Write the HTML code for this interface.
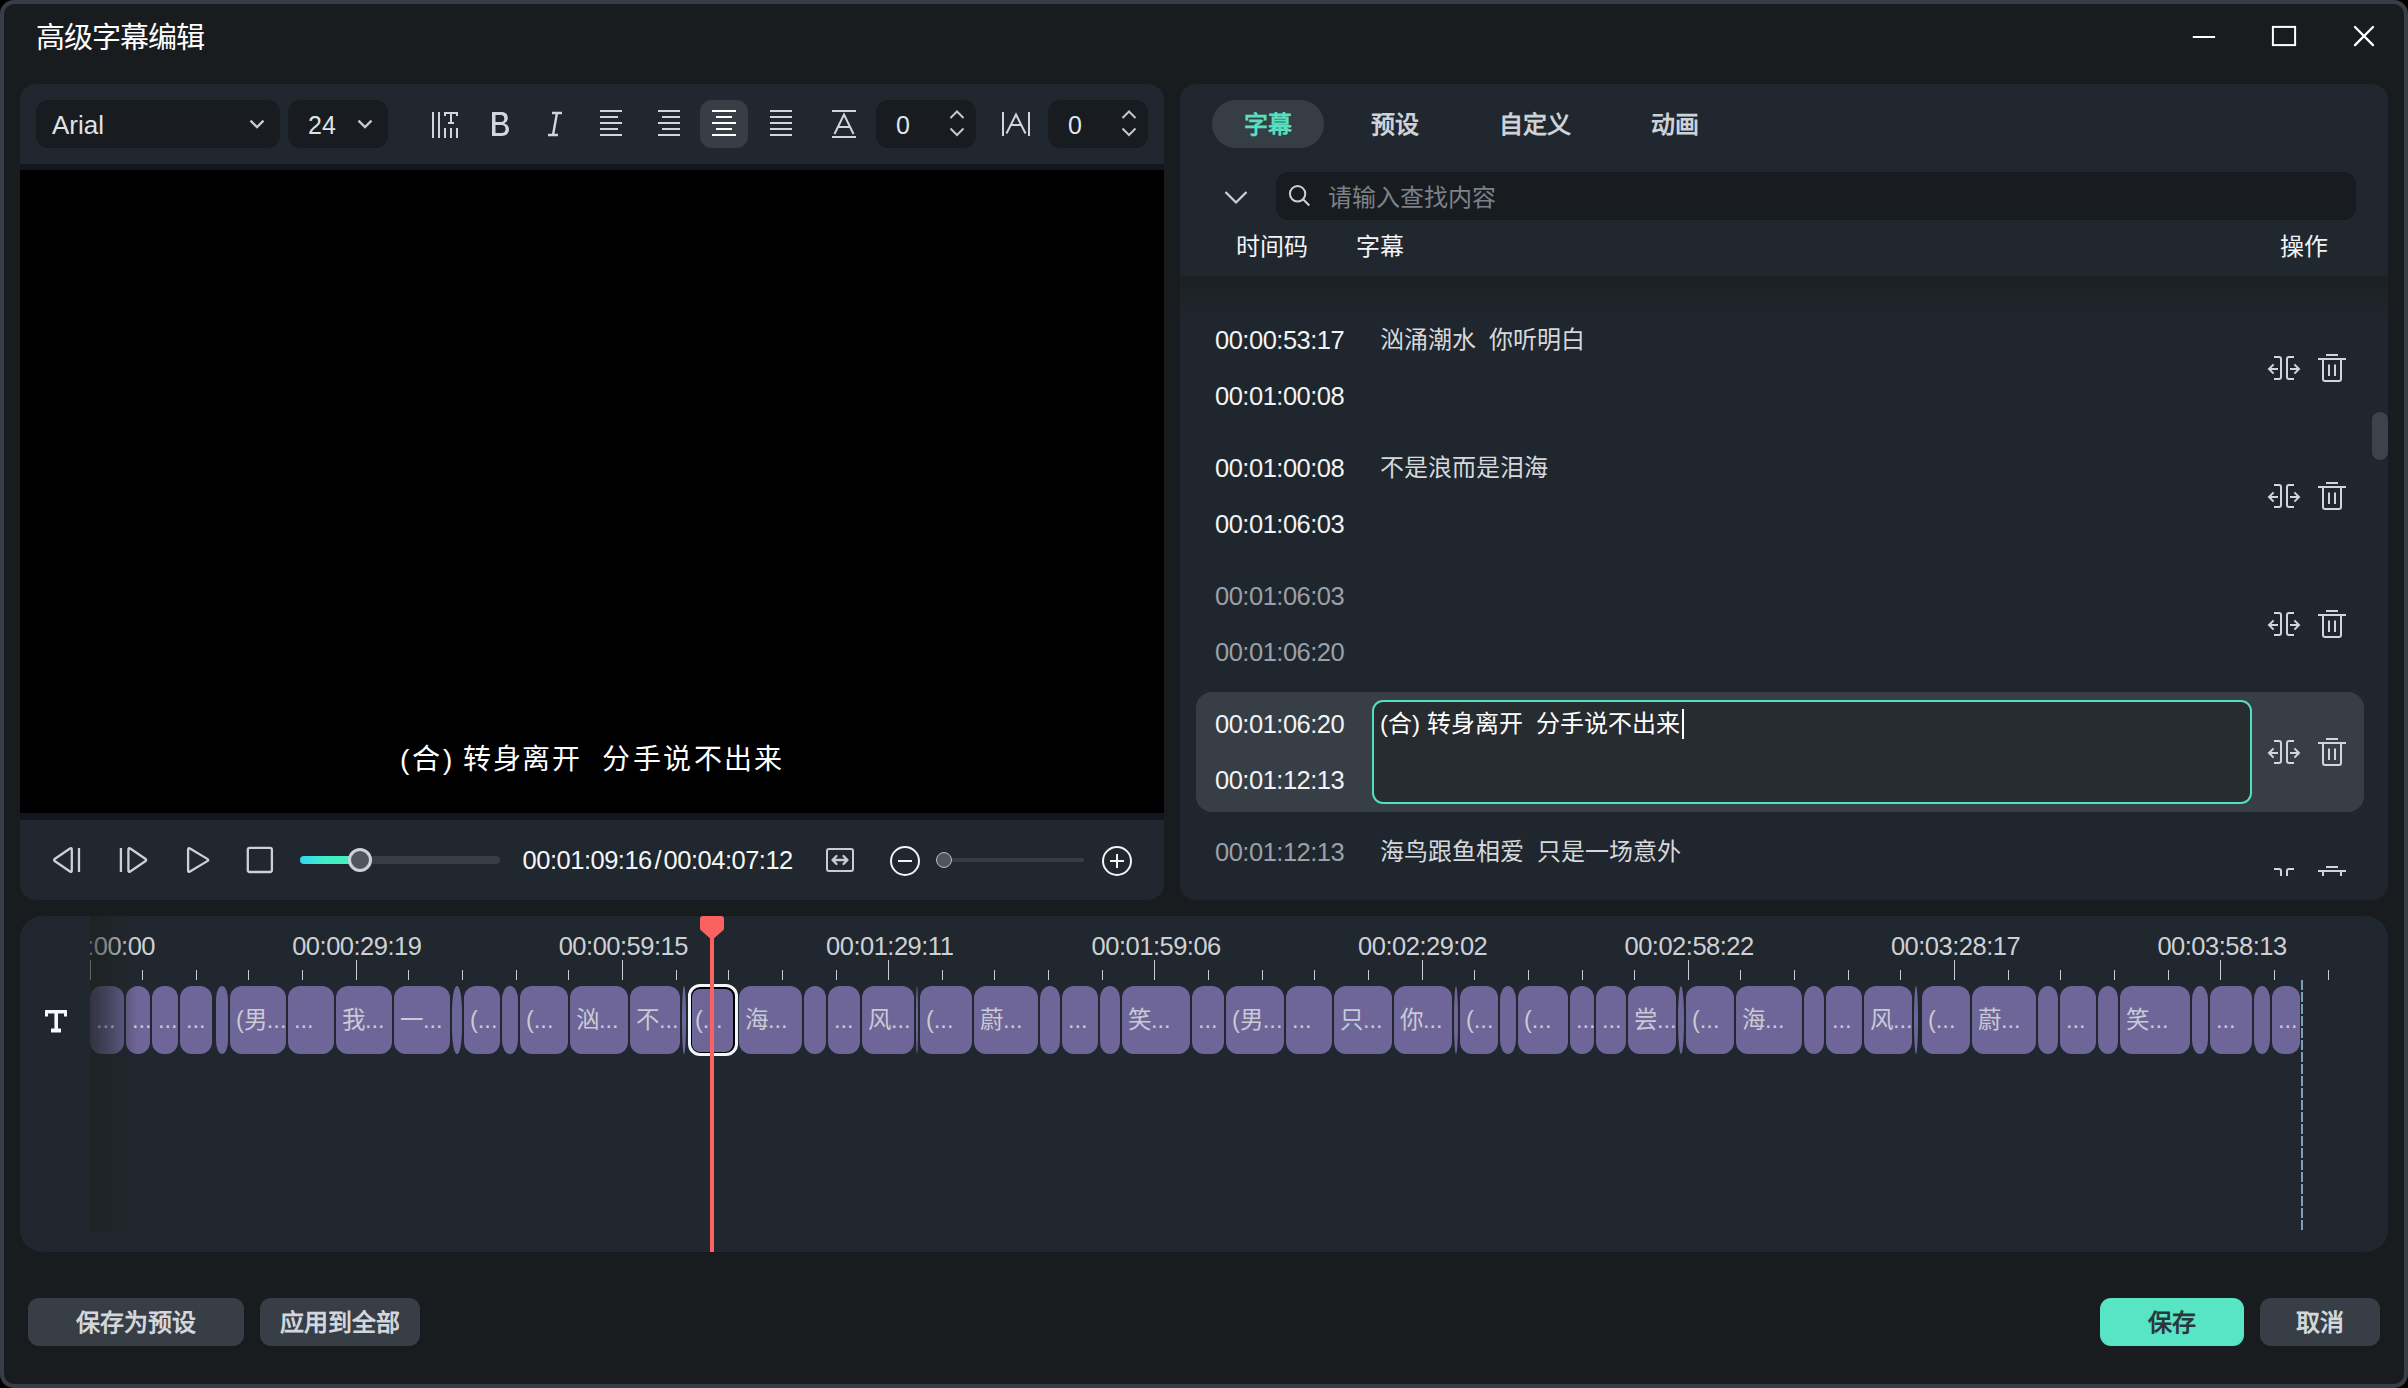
<!DOCTYPE html><html lang="zh-CN"><head><meta charset="utf-8"><title>高级字幕编辑</title><style>
*{box-sizing:border-box;margin:0;padding:0}
html,body{width:2408px;height:1388px;overflow:hidden;background:#000}
body{font-family:"Liberation Sans",sans-serif;color:#e9ebee;position:relative}
.abs,.win *{position:absolute}
.win{position:absolute;left:0;top:0;width:2408px;height:1388px;border:4px solid #373d44;border-radius:14px;background:#191c1f;overflow:hidden}
/* everything inside .win is positioned relative to the page origin via .o (offset -4,-4) */
.o{left:-4px;top:-4px;width:2408px;height:1388px}
.panel{background:#21272e;border-radius:16px}
.dark{background:#181c20;border-radius:12px}
.t{white-space:nowrap;line-height:1}
svg{overflow:visible}
.clip{top:986px;height:68px;background:#6e6698;border-radius:12px;overflow:hidden;color:#cacad4;font-size:23.5px;line-height:68px;white-space:nowrap;padding-left:6px}
.tk{width:1.3px;background:#c8ced5;top:970px;height:10px}
.tk.M{top:960px;height:20px}
.rl{top:932px;font-size:25.5px;letter-spacing:-.5px;line-height:26px;color:#cdd1d6;white-space:nowrap;width:200px;text-align:center}
.tc{left:1215px;font-size:25.5px;letter-spacing:-.5px;line-height:28px;white-space:nowrap;color:#f1f3f5}
.tc.g{color:#9aa0a7}
.sub{left:1380px;font-size:24px;line-height:28px;white-space:nowrap;color:#d5d8dc}
.btn{top:1298px;height:48px;border-radius:11px;background:#373e46;color:#d3d7dc;font-weight:bold;font-size:24px;line-height:50px;text-align:center;white-space:nowrap}
.tab{top:100px;height:48px;line-height:50px;font-size:24px;font-weight:bold;color:#ced2d7;white-space:nowrap;text-align:center}
</style></head><body>
<div class="win"><div class="o">
<div class="t" style="left:35.5px;top:21.5px;font-size:29px;letter-spacing:-1px;line-height:32px;color:#fff">高级字幕编辑</div>
<svg class="abs" style="left:2180px;top:16px" width="200" height="44" viewBox="0 0 200 44" fill="none" stroke="#d2d6dc" stroke-width="2" ><path d="M12.8 20.9H35.1" stroke="#fff"/><rect x="92.9" y="10.9" width="22.2" height="18.2" stroke="#fff"/><path d="M175 11L193 29.1M193 11L175 29.1" stroke="#fff" stroke-width="2.3" stroke-linecap="round"/></svg>
<div class="panel" style="left:20px;top:84px;width:1144px;height:816px;overflow:hidden">
<div style="left:0;top:80px;width:1144px;height:656px;background:#12161e"></div>
<div style="left:0;top:86px;width:1144px;height:643px;background:#000"></div>
</div>
<div class="dark" style="left:36px;top:100px;width:244px;height:48px"></div>
<div class="t" style="left:52px;top:111px;font-size:26px;line-height:28px;color:#dfe3e8">Arial</div>
<svg class="abs" style="left:246px;top:114px" width="22" height="22" viewBox="0 0 22 22" fill="none" stroke="#d2d6dc" stroke-width="2" ><path d="M4.5 6.6L11 13.1L17.5 6.6" stroke="#c4c8cd" stroke-width="2.4"/></svg>
<div class="dark" style="left:288px;top:100px;width:100px;height:48px"></div>
<div class="t" style="left:308px;top:111px;font-size:25px;line-height:28px;color:#dfe3e8">24</div>
<svg class="abs" style="left:354px;top:114px" width="22" height="22" viewBox="0 0 22 22" fill="none" stroke="#d2d6dc" stroke-width="2" ><path d="M4.5 6.6L11 13.1L17.5 6.6" stroke="#c4c8cd" stroke-width="2.4"/></svg>
<svg class="abs" style="left:430px;top:110px" width="30" height="30" viewBox="0 0 30 30" fill="none" stroke="#d2d6dc" stroke-width="2" ><path d="M3 2V28M9 2V28M15 18V28M21 18V28M27 18V28"/><path d="M15 6V3H27V6M21 3V13M18 13H24"/></svg>
<svg class="abs" style="left:491.5px;top:112px" width="17" height="24" viewBox="0 0 17 24" fill="#d2d6dc" fill-rule="evenodd"><path d="M0 0H9.4C13.4 0 15.8 2.3 15.8 6C15.8 8.7 14.4 10.5 12.1 11.4C15.1 12 17 14.2 17 17.3C17 21.5 14 24 9.8 24H0ZM3.5 3V10.1H8.8C11.1 10.1 12.3 8.8 12.3 6.5C12.3 4.2 11.1 3 8.8 3ZM3.5 13.1V21H9.4C12.1 21 13.5 19.5 13.5 17C13.5 14.5 12.1 13.1 9.4 13.1Z"/></svg>
<svg class="abs" style="left:546px;top:110px" width="18" height="28" viewBox="0 0 18 28" fill="none" stroke="#d2d6dc" stroke-width="2" ><path d="M6 3H16M2 25H12M11 3L7 25" stroke-width="2.4"/></svg>
<svg class="abs" style="left:600px;top:108px" width="22" height="30" viewBox="0 0 22 30" fill="none" stroke="#d2d6dc" stroke-width="2" ><path d="M0 3H22M0 9H18M0 15H22M0 21H18M0 27H22"/></svg>
<svg class="abs" style="left:658px;top:108px" width="22" height="30" viewBox="0 0 22 30" fill="none" stroke="#d2d6dc" stroke-width="2" ><path d="M0 3H22M4 9H22M0 15H22M4 21H22M0 27H22"/></svg>
<div style="left:700px;top:100px;width:48px;height:48px;border-radius:12px;background:#373e46"></div>
<svg class="abs" style="left:712px;top:108px" width="24" height="30" viewBox="0 0 24 30" fill="none" stroke="#d2d6dc" stroke-width="2" ><path d="M0 3H24M4 9H20M0 15H24M4 21H20M0 27H24" stroke="#fff"/></svg>
<svg class="abs" style="left:770px;top:108px" width="22" height="30" viewBox="0 0 22 30" fill="none" stroke="#d2d6dc" stroke-width="2" ><path d="M0 3H22M0 9H22M0 15H22M0 21H22M0 27H22"/></svg>
<svg class="abs" style="left:832px;top:108px" width="24" height="32" viewBox="0 0 24 32" fill="none" stroke="#d2d6dc" stroke-width="2" ><path d="M0 3H24M0 29H24M2.5 26L12 6.5L21.5 26M6 19H18"/></svg>
<div class="dark" style="left:876px;top:100px;width:100px;height:48px"></div>
<div class="t" style="left:896px;top:111px;font-size:25px;line-height:28px;color:#dfe6ee">0</div>
<svg class="abs" style="left:947px;top:106px" width="20" height="36" viewBox="0 0 20 36" fill="none" stroke="#d2d6dc" stroke-width="2" ><path d="M3.5 12L10 5.5L16.5 12M3.5 22.5L10 29L16.5 22.5" stroke="#c4c8cd"/></svg>
<svg class="abs" style="left:1000px;top:110px" width="32" height="28" viewBox="0 0 32 28" fill="none" stroke="#d2d6dc" stroke-width="2" ><path d="M3 2V26M29 2V26M6.5 23.5L16 4.5L25.5 23.5M10.5 15H21.5"/></svg>
<div class="dark" style="left:1048px;top:100px;width:100px;height:48px"></div>
<div class="t" style="left:1068px;top:111px;font-size:25px;line-height:28px;color:#dfe6ee">0</div>
<svg class="abs" style="left:1119px;top:106px" width="20" height="36" viewBox="0 0 20 36" fill="none" stroke="#d2d6dc" stroke-width="2" ><path d="M3.5 12L10 5.5L16.5 12M3.5 22.5L10 29L16.5 22.5" stroke="#c4c8cd"/></svg>
<div class="t" style="left:400px;top:744px;font-size:28px;line-height:32px;color:#fff">(</div>
<div class="t" style="left:412px;top:744px;font-size:28px;line-height:32px;color:#fff">合</div>
<div class="t" style="left:443px;top:744px;font-size:28px;line-height:32px;color:#fff">)</div>
<div class="t" style="left:463px;top:744px;font-size:28px;line-height:32px;color:#fff;letter-spacing:1.6px">转身离开</div>
<div class="t" style="left:602.4px;top:744px;font-size:28px;line-height:32px;color:#fff;letter-spacing:2.4px">分手说不出来</div>
<svg class="abs" style="left:0;top:820px" width="300" height="80" viewBox="0 820 300 80" fill="none" stroke="#cdd1d7" stroke-width="2.3"><path d="M55.02 861.24Q53.20 860.00 55.02 858.76L69.98 848.54Q71.80 847.30 71.80 849.50L71.80 870.50Q71.80 872.70 69.98 871.46Z"/><path d="M79 848V872"/><path d="M145.28 861.24Q147.10 860.00 145.28 858.76L130.22 848.54Q128.40 847.30 128.40 849.50L128.40 870.50Q128.40 872.70 130.22 871.46Z"/><path d="M120.9 848V872"/><path d="M207.32 861.13Q209.20 860.00 207.32 858.87L189.98 848.43Q188.10 847.30 188.10 849.50L188.10 870.50Q188.10 872.70 189.98 871.57Z"/><rect x="247.8" y="847.9" width="24.1" height="24.1" rx="2"/></svg>
<div style="left:300px;top:856px;width:200px;height:8px;border-radius:4px;background:#373d45"></div>
<div style="left:300px;top:856px;width:60px;height:8px;border-radius:4px;background:linear-gradient(100deg,#34d6f2 0%,#41ecc8 40%,#46f0b6 100%)"></div>
<div style="left:348px;top:848px;width:24px;height:24px;border-radius:12px;background:#50565e;border:3.6px solid #cdd1d6"></div>
<div class="t" style="left:522.6px;top:846px;font-size:25.5px;letter-spacing:-.5px;line-height:28px;color:#f4f6f8">00:01:09:16<span style="position:static;padding:0 2.6px">/</span>00:04:07:12</div>
<svg class="abs" style="left:824px;top:846px" width="32" height="28" viewBox="0 0 32 28" fill="none" stroke="#d2d6dc" stroke-width="2" ><rect x="3" y="3" width="26" height="22" rx="2" stroke="#c9cdd3"/><path d="M9 14H23M12.5 10L8.5 14L12.5 18M19.5 10L23.5 14L19.5 18" stroke-width="2.3" stroke="#c9cdd3" stroke-linecap="round" stroke-linejoin="round"/></svg>
<svg class="abs" style="left:888px;top:844px" width="34" height="34" viewBox="0 0 34 34" fill="none" stroke="#d2d6dc" stroke-width="2" ><circle cx="17" cy="17" r="14" stroke="#f1f3f5"/><path d="M10 17H24" stroke="#f1f3f5"/></svg>
<div style="left:944px;top:858px;width:140px;height:4px;border-radius:2px;background:#373d45"></div>
<div style="left:936px;top:852px;width:16px;height:16px;border-radius:8px;background:#50565e;border:1.7px solid #b8bdc4"></div>
<svg class="abs" style="left:1100px;top:844px" width="34" height="34" viewBox="0 0 34 34" fill="none" stroke="#d2d6dc" stroke-width="2" ><circle cx="17" cy="17" r="14" stroke="#f1f3f5"/><path d="M10 17H24M17 10V24" stroke="#f1f3f5"/></svg>
<div class="panel" style="left:1180px;top:84px;width:1208px;height:816px;overflow:hidden">
<div style="left:0;top:192px;width:1208px;height:624px;background:#20262d"></div>
<div style="left:0;top:192px;width:1208px;height:44px;background:linear-gradient(#1c2024,#20262d)"></div>
</div>
<div style="left:1212px;top:100px;width:112px;height:48px;border-radius:24px;background:#363d45"></div>
<div class="tab" style="left:1212px;width:112px;color:#55e0c0">字幕</div>
<div class="tab" style="left:1335px;width:120px">预设</div>
<div class="tab" style="left:1475px;width:120px">自定义</div>
<div class="tab" style="left:1615px;width:120px">动画</div>
<svg class="abs" style="left:1222px;top:184px" width="28" height="24" viewBox="0 0 28 24" fill="none" stroke="#d2d6dc" stroke-width="2" ><path d="M3.5 8L14 18.5L24.5 8" stroke="#cdd1d6" stroke-width="2.2"/></svg>
<div class="dark" style="left:1276px;top:172px;width:1080px;height:48px"></div>
<svg class="abs" style="left:1286px;top:182px" width="28" height="28" viewBox="0 0 28 28" fill="none" stroke="#d2d6dc" stroke-width="2" ><circle cx="11.6" cy="11.8" r="7.7" stroke="#cdd1d6"/><path d="M17.3 17.5L23.3 23.5" stroke="#cdd1d6"/></svg>
<div class="t" style="left:1328px;top:184px;font-size:24px;line-height:28px;color:#7b8289">请输入查找内容</div>
<div class="t" style="left:1236px;top:233px;font-size:24px;line-height:28px;color:#f1f3f5">时间码</div>
<div class="t" style="left:1356px;top:233px;font-size:24px;line-height:28px;color:#f1f3f5">字幕</div>
<div class="t" style="left:2280px;top:233px;font-size:24px;line-height:28px;color:#f1f3f5">操作</div>
<div style="left:1180px;top:276px;width:1208px;height:600px;overflow:hidden">
<div class="tc" style="left:35px;top:50px">00:00:53:17</div><div class="tc" style="left:35px;top:106px">00:01:00:08</div><div class="sub" style="left:200px;top:50px">汹涌潮水&nbsp; 你听明白</div><svg style="left:1086px;top:79px" width="36" height="26" viewBox="0 0 36 26" fill="none" stroke="#d2d6dc" stroke-width="2"><path d="M8 2H13A2 2 0 0 1 15 4V22A2 2 0 0 1 13 24H8M28 2H23A2 2 0 0 0 21 4V22A2 2 0 0 0 23 24H28M3 14H12M7.6 9.4L3 14L7.6 18.6M33 14H24M28.4 9.4L33 14L28.4 18.6"/></svg><svg style="left:1136px;top:76px" width="32" height="32" viewBox="0 0 32 32" fill="none" stroke="#d2d6dc" stroke-width="2"><path d="M10 3H22M2 7H30M7 7V27A2 2 0 0 0 9 29H23A2 2 0 0 0 25 27V7M13 12.5V24M19 12.5V24"/></svg>
<div class="tc" style="left:35px;top:178px">00:01:00:08</div><div class="tc" style="left:35px;top:234px">00:01:06:03</div><div class="sub" style="left:200px;top:178px">不是浪而是泪海</div><svg style="left:1086px;top:207px" width="36" height="26" viewBox="0 0 36 26" fill="none" stroke="#d2d6dc" stroke-width="2"><path d="M8 2H13A2 2 0 0 1 15 4V22A2 2 0 0 1 13 24H8M28 2H23A2 2 0 0 0 21 4V22A2 2 0 0 0 23 24H28M3 14H12M7.6 9.4L3 14L7.6 18.6M33 14H24M28.4 9.4L33 14L28.4 18.6"/></svg><svg style="left:1136px;top:204px" width="32" height="32" viewBox="0 0 32 32" fill="none" stroke="#d2d6dc" stroke-width="2"><path d="M10 3H22M2 7H30M7 7V27A2 2 0 0 0 9 29H23A2 2 0 0 0 25 27V7M13 12.5V24M19 12.5V24"/></svg>
<div class="tc g" style="left:35px;top:306px">00:01:06:03</div><div class="tc g" style="left:35px;top:362px">00:01:06:20</div><svg style="left:1086px;top:335px" width="36" height="26" viewBox="0 0 36 26" fill="none" stroke="#d2d6dc" stroke-width="2"><path d="M8 2H13A2 2 0 0 1 15 4V22A2 2 0 0 1 13 24H8M28 2H23A2 2 0 0 0 21 4V22A2 2 0 0 0 23 24H28M3 14H12M7.6 9.4L3 14L7.6 18.6M33 14H24M28.4 9.4L33 14L28.4 18.6"/></svg><svg style="left:1136px;top:332px" width="32" height="32" viewBox="0 0 32 32" fill="none" stroke="#d2d6dc" stroke-width="2"><path d="M10 3H22M2 7H30M7 7V27A2 2 0 0 0 9 29H23A2 2 0 0 0 25 27V7M13 12.5V24M19 12.5V24"/></svg>
<div style="left:16px;top:416px;width:1168px;height:120px;border-radius:16px;background:#373e46"></div><div style="left:192px;top:424px;width:880px;height:104px;border-radius:11px;background:#272c31;border:2px solid #52dfbd"></div><div class="tc" style="left:35px;top:434px">00:01:06:20</div><div class="tc" style="left:35px;top:490px">00:01:12:13</div><div class="sub" style="left:200px;top:434px;color:#fff">(合) 转身离开&nbsp; 分手说不出来</div><svg style="left:1086px;top:463px" width="36" height="26" viewBox="0 0 36 26" fill="none" stroke="#d2d6dc" stroke-width="2"><path d="M8 2H13A2 2 0 0 1 15 4V22A2 2 0 0 1 13 24H8M28 2H23A2 2 0 0 0 21 4V22A2 2 0 0 0 23 24H28M3 14H12M7.6 9.4L3 14L7.6 18.6M33 14H24M28.4 9.4L33 14L28.4 18.6"/></svg><svg style="left:1136px;top:460px" width="32" height="32" viewBox="0 0 32 32" fill="none" stroke="#d2d6dc" stroke-width="2"><path d="M10 3H22M2 7H30M7 7V27A2 2 0 0 0 9 29H23A2 2 0 0 0 25 27V7M13 12.5V24M19 12.5V24"/></svg>
<div class="tc g" style="left:35px;top:562px">00:01:12:13</div><div class="sub" style="left:200px;top:562px">海鸟跟鱼相爱&nbsp; 只是一场意外</div><svg style="left:1086px;top:591px" width="36" height="26" viewBox="0 0 36 26" fill="none" stroke="#d2d6dc" stroke-width="2"><path d="M8 2H13A2 2 0 0 1 15 4V22A2 2 0 0 1 13 24H8M28 2H23A2 2 0 0 0 21 4V22A2 2 0 0 0 23 24H28M3 14H12M7.6 9.4L3 14L7.6 18.6M33 14H24M28.4 9.4L33 14L28.4 18.6"/></svg><svg style="left:1136px;top:588px" width="32" height="32" viewBox="0 0 32 32" fill="none" stroke="#d2d6dc" stroke-width="2"><path d="M10 3H22M2 7H30M7 7V27A2 2 0 0 0 9 29H23A2 2 0 0 0 25 27V7M13 12.5V24M19 12.5V24"/></svg>
</div>
<div style="left:1681.5px;top:709px;width:2px;height:30px;background:#fff"></div>
<div style="left:2372px;top:412px;width:16px;height:48px;border-radius:8px;background:#3c434b"></div>
<div class="panel" style="left:20px;top:916px;width:2368px;height:336px;border-radius:22px"></div>
<svg class="abs" style="left:44px;top:1009px" width="24" height="24" viewBox="0 0 24 24" fill="#f4f8ff"><path d="M1 1.5Q1 1 1.5 1H22.5Q23 1 23 1.5V7.5H20V4.5H14V19.5H17V23.5H7V19.5H10.4V4.5H4V7.5H1Z"/></svg>
<div class="tk M" style="left:90px"></div>
<div class="tk" style="left:142px"></div>
<div class="tk" style="left:196px"></div>
<div class="tk" style="left:248px"></div>
<div class="tk" style="left:302px"></div>
<div class="tk M" style="left:356px"></div>
<div class="tk" style="left:408px"></div>
<div class="tk" style="left:462px"></div>
<div class="tk" style="left:516px"></div>
<div class="tk" style="left:568px"></div>
<div class="tk M" style="left:622px"></div>
<div class="tk" style="left:676px"></div>
<div class="tk" style="left:728px"></div>
<div class="tk" style="left:782px"></div>
<div class="tk" style="left:836px"></div>
<div class="tk M" style="left:888px"></div>
<div class="tk" style="left:942px"></div>
<div class="tk" style="left:994px"></div>
<div class="tk" style="left:1048px"></div>
<div class="tk" style="left:1102px"></div>
<div class="tk M" style="left:1154px"></div>
<div class="tk" style="left:1208px"></div>
<div class="tk" style="left:1262px"></div>
<div class="tk" style="left:1314px"></div>
<div class="tk" style="left:1368px"></div>
<div class="tk M" style="left:1422px"></div>
<div class="tk" style="left:1474px"></div>
<div class="tk" style="left:1528px"></div>
<div class="tk" style="left:1582px"></div>
<div class="tk" style="left:1634px"></div>
<div class="tk M" style="left:1688px"></div>
<div class="tk" style="left:1740px"></div>
<div class="tk" style="left:1794px"></div>
<div class="tk" style="left:1848px"></div>
<div class="tk" style="left:1900px"></div>
<div class="tk M" style="left:1954px"></div>
<div class="tk" style="left:2008px"></div>
<div class="tk" style="left:2060px"></div>
<div class="tk" style="left:2114px"></div>
<div class="tk" style="left:2168px"></div>
<div class="tk M" style="left:2220px"></div>
<div class="tk" style="left:2274px"></div>
<div class="tk" style="left:2328px"></div>
<div style="left:90px;top:920px;width:2298px;height:60px;overflow:hidden">
<div class="rl" style="left:-99.6px;top:13px">00:00:00:00</div>
<div class="rl" style="left:166.8px;top:13px">00:00:29:19</div>
<div class="rl" style="left:433.3px;top:13px">00:00:59:15</div>
<div class="rl" style="left:699.7px;top:13px">00:01:29:11</div>
<div class="rl" style="left:966.2px;top:13px">00:01:59:06</div>
<div class="rl" style="left:1232.7px;top:13px">00:02:29:02</div>
<div class="rl" style="left:1499.1px;top:13px">00:02:58:22</div>
<div class="rl" style="left:1765.5px;top:13px">00:03:28:17</div>
<div class="rl" style="left:2032.0px;top:13px">00:03:58:13</div>
</div>
<div class="clip" style="left:90px;width:34.0px;background:linear-gradient(90deg,rgba(0,0,0,.2),rgba(0,0,0,.064) 34px),#6e6698;">...</div>
<div class="clip" style="left:126px;width:24.0px;background:linear-gradient(90deg,rgba(0,0,0,.056),rgba(0,0,0,0) 14px),#6e6698;">...</div>
<div class="clip" style="left:152px;width:26.0px;">...</div>
<div class="clip" style="left:180px;width:32.0px;">...</div>
<div class="clip" style="left:216px;width:12.3px;border-radius:6.2px/14px;padding:0;"></div>
<div class="clip" style="left:230px;width:56.0px;">(男...</div>
<div class="clip" style="left:288px;width:46.0px;">...</div>
<div class="clip" style="left:336px;width:56.0px;">我...</div>
<div class="clip" style="left:394px;width:56.0px;">一...</div>
<div class="clip" style="left:452px;width:9.5px;border-radius:4.8px/26px;padding:0;"></div>
<div class="clip" style="left:464px;width:36.0px;">(...</div>
<div class="clip" style="left:502.4px;width:15.6px;border-radius:7.8px/14px;padding:0;"></div>
<div class="clip" style="left:520px;width:48.0px;">(...</div>
<div class="clip" style="left:570px;width:58.0px;">汹...</div>
<div class="clip" style="left:630px;width:50.0px;">不...</div>
<div class="clip" style="left:681.7px;width:3.9px;border-radius:1.9px/34px;padding:0;"></div>
<div style="left:688px;top:984px;width:50px;height:72px;border-radius:12px;background:#000;border:3px solid #f1f7fa"></div>
<div class="clip" style="left:692px;top:988.5px;width:40.6px;height:63px;border-radius:8px;line-height:63px;padding-left:3px">(...</div>
<div class="clip" style="left:739px;width:63.0px;">海...</div>
<div class="clip" style="left:804.4px;width:21.6px;border-radius:10.8px/12px;padding:0;"></div>
<div class="clip" style="left:828px;width:32.0px;">...</div>
<div class="clip" style="left:862px;width:52.0px;">风...</div>
<div class="clip" style="left:915.7px;width:2.4px;border-radius:1.2px/34px;padding:0;"></div>
<div class="clip" style="left:920px;width:51.6px;">(...</div>
<div class="clip" style="left:974px;width:64.0px;">蔚...</div>
<div class="clip" style="left:1040px;width:20.0px;border-radius:10.0px/12px;padding:0;"></div>
<div class="clip" style="left:1062px;width:36.0px;">...</div>
<div class="clip" style="left:1100px;width:20.0px;border-radius:10.0px/12px;padding:0;"></div>
<div class="clip" style="left:1122px;width:68.0px;">笑...</div>
<div class="clip" style="left:1192px;width:32.0px;">...</div>
<div class="clip" style="left:1226px;width:58.0px;">(男...</div>
<div class="clip" style="left:1286px;width:46.0px;">...</div>
<div class="clip" style="left:1334px;width:58.0px;">只...</div>
<div class="clip" style="left:1394px;width:58.0px;">你...</div>
<div class="clip" style="left:1453.7px;width:4.0px;border-radius:2.0px/34px;padding:0;"></div>
<div class="clip" style="left:1460px;width:38.0px;">(...</div>
<div class="clip" style="left:1500px;width:16.0px;border-radius:8.0px/14px;padding:0;"></div>
<div class="clip" style="left:1518px;width:50.0px;">(...</div>
<div class="clip" style="left:1570px;width:24.0px;">...</div>
<div class="clip" style="left:1596px;width:30.0px;">...</div>
<div class="clip" style="left:1628px;width:48.0px;">尝...</div>
<div class="clip" style="left:1678.1000000000001px;width:6.2px;border-radius:3.1px/34px;padding:0;"></div>
<div class="clip" style="left:1686px;width:48.0px;">(...</div>
<div class="clip" style="left:1736px;width:66.0px;">海...</div>
<div class="clip" style="left:1804px;width:20.0px;border-radius:10.0px/12px;padding:0;"></div>
<div class="clip" style="left:1826px;width:36.0px;">...</div>
<div class="clip" style="left:1864px;width:48.0px;">风...</div>
<div class="clip" style="left:1913.7px;width:4.2px;border-radius:2.1px/34px;padding:0;"></div>
<div class="clip" style="left:1922px;width:48.0px;">(...</div>
<div class="clip" style="left:1972px;width:64.0px;">蔚...</div>
<div class="clip" style="left:2038px;width:20.0px;border-radius:10.0px/12px;padding:0;"></div>
<div class="clip" style="left:2060px;width:36.0px;">...</div>
<div class="clip" style="left:2098px;width:20.0px;border-radius:10.0px/12px;padding:0;"></div>
<div class="clip" style="left:2120px;width:70.0px;">笑...</div>
<div class="clip" style="left:2192px;width:16.0px;border-radius:8.0px/14px;padding:0;"></div>
<div class="clip" style="left:2210px;width:42.0px;">...</div>
<div class="clip" style="left:2254px;width:16.0px;border-radius:8.0px/14px;padding:0;"></div>
<div class="clip" style="left:2272px;width:28.0px;">...</div>
<div style="left:90px;top:916px;width:46px;height:316px;background:linear-gradient(90deg,rgba(27,32,30,.62),rgba(27,32,30,0))"></div>
<div style="left:2301px;top:980px;width:2.2px;height:250px;background:repeating-linear-gradient(#7f9fb7 0 10px,rgba(0,0,0,0) 10px 12px)"></div>
<div style="left:710px;top:930px;width:4px;height:322px;background:#fa6262"></div>
<svg class="abs" style="left:700px;top:916px" width="24" height="24" viewBox="0 0 24 24" fill="#fa6262"><path d="M0 3Q0 0 3 0H21Q24 0 24 3V12.5Q24 13.5 23.2 14.2L13.5 22.7Q12 24 10.5 22.7L0.8 14.2Q0 13.5 0 12.5Z"/></svg>
<div class="btn" style="left:28px;width:216px">保存为预设</div>
<div class="btn" style="left:260px;width:160px">应用到全部</div>
<div class="btn" style="left:2100px;width:144px;background:#57e5c6;color:#2c373d">保存</div>
<div class="btn" style="left:2260px;width:120px">取消</div>
</div></div></body></html>
